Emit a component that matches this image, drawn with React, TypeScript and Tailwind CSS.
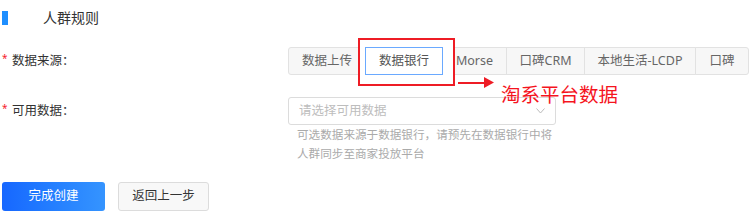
import React from "react";

type Seg = { label: string; width: string; active?: boolean };

const SEGMENTS: Seg[] = [
  { label: "数据上传", width: "w-[78px]" },
  { label: "数据银行", width: "w-[78px]", active: true },
  { label: "Morse", width: "w-[65px]" },
  { label: "口碑CRM", width: "w-[79px]" },
  { label: "本地生活-LCDP", width: "w-[112px]" },
  { label: "口碑", width: "w-[54px]" },
];

const FONT = "font-['Noto_Sans','Noto_Sans_CJK_SC',sans-serif]";

const Label = ({ text }: { text: string }) => (
  <div className="w-[286px] shrink-0 flex items-center text-[12.5px] text-[#333]">
    <span className="w-[10px] text-[10px] text-[#f5222d] -mt-[5px]">*</span>
    <span>{text}：</span>
  </div>
);

export default function App() {
  return (
    <div className={`w-[756px] h-[216px] bg-white pt-[11px] pl-[2px] ${FONT}`}>
      {/* section title */}
      <div className="flex items-center h-[14px]">
        <div className="w-[6px] h-[14px] bg-[#1f8fff]" />
        <span className="ml-[35px] text-[14px] leading-[14px] text-[#333]">人群规则</span>
      </div>

      {/* data source */}
      <div className="flex mt-[22px] h-[28px]">
        <Label text="数据来源" />
        <div className="relative flex">
          {SEGMENTS.map((s, i) => (
            <div
              key={s.label}
              className={`${s.width} h-[28px] flex items-center justify-center text-[12.5px] border ${
                i > 0 ? "-ml-px" : "rounded-l-[3px]"
              } ${i === SEGMENTS.length - 1 ? "rounded-r-[3px]" : ""} ${
                s.active
                  ? "relative z-10 bg-white border-[#6aa9ff] text-[#555]"
                  : "bg-[#f7f7f7] border-[#e2e2e2] text-[#666]"
              }`}
            >
              {s.label}
            </div>
          ))}

          {/* annotation */}
          <div className="absolute left-[70px] top-[-9px] w-[97px] h-[48px] border-2 border-[#ee1c25] bg-white" />
          <div className="absolute left-[170px] top-[30px] flex items-center">
            <div className="w-[26px] h-[2px] bg-[#ee1c25]" />
            <svg width="10" height="11" viewBox="0 0 10 11" className="block">
              <path d="M0 0 L10 5.5 L0 11 Z" fill="#ee1c25" />
            </svg>
          </div>
          <div className="absolute left-[213px] top-[36px] text-[19.5px] leading-[24px] text-[#f5141e] whitespace-nowrap">
            淘系平台数据
          </div>
        </div>
      </div>

      {/* usable data */}
      <div className="flex mt-[22px]">
        <div className="h-[28px] flex">
          <Label text="可用数据" />
        </div>
        <div className="w-[268px]">
          <div className="h-[28px] border border-[#dcdcdc] rounded-[3px] flex items-center justify-between pl-[10px] pr-[10px]">
            <span className="text-[12.5px] text-[#bdbdbd]">请选择可用数据</span>
            <svg width="9" height="6" viewBox="0 0 9 6" fill="none">
              <path d="M0.5 0.5 L4.5 5 L8.5 0.5" stroke="#bbb" strokeWidth="1" />
            </svg>
          </div>
          <p className="pl-[9px] text-[11.6px] leading-[19px] text-[#aaa] whitespace-nowrap">
            可选数据来源于数据银行，请预先在数据银行中将
            <br />
            人群同步至商家投放平台
          </p>
        </div>
      </div>

      {/* actions */}
      <div className="flex mt-[19px] gap-[13px]">
        <button
          type="button"
          className="w-[103px] h-[29px] rounded-[3px] bg-gradient-to-r from-[#1767ff] to-[#3594ff] text-white text-[12.5px]"
        >
          完成创建
        </button>
        <button
          type="button"
          className="w-[91px] h-[29px] rounded-[3px] border border-[#dcdcdc] bg-[#f8f8f8] text-[#333] text-[12.5px]"
        >
          返回上一步
        </button>
      </div>
    </div>
  );
}
